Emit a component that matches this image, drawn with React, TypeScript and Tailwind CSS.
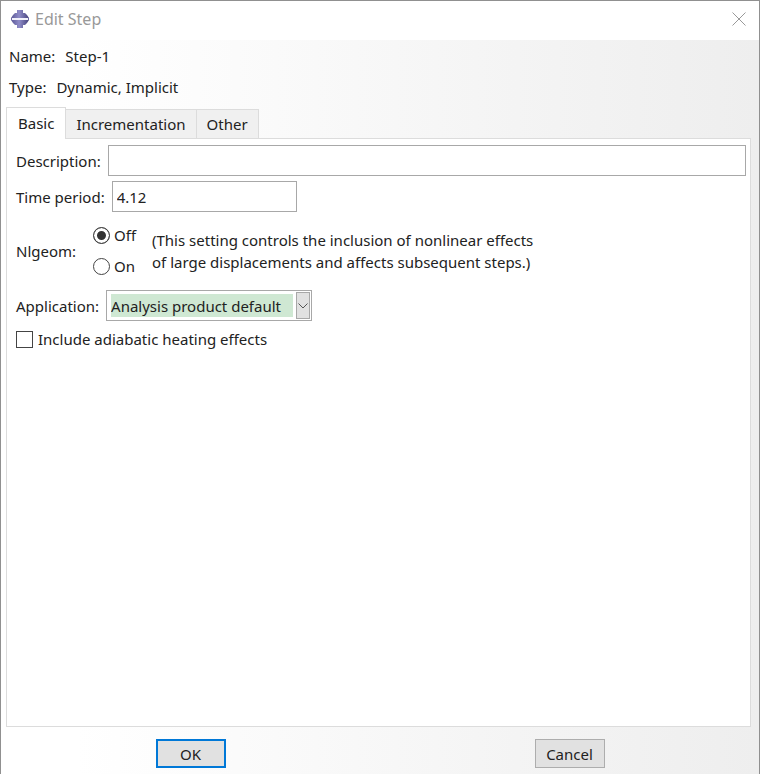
import { useState } from 'react';

const tabs = ['Basic', 'Incrementation', 'Other'];

const radioClass =
  'size-[17px] appearance-none rounded-full border border-[#444444] bg-white checked:bg-[#333333] checked:shadow-[inset_0_0_0_3px_#ffffff]';

function AppIcon() {
  return (
    <svg width="18" height="18" viewBox="0 0 18 18" aria-hidden="true">
      <defs>
        <linearGradient id="steel" x1="0" x2="1" y1="0" y2="0">
          <stop offset="0" stopColor="#5a5796" />
          <stop offset="0.45" stopColor="#8f8cc8" />
          <stop offset="1" stopColor="#45427c" />
        </linearGradient>
      </defs>
      <path d="M6 0h6v3h2l2 2 2 3H0l2-3 2-2h2z" fill="url(#steel)" />
      <path d="M0 10h18l-2 3-2 2h-2v3H6v-3H4l-2-2z" fill="url(#steel)" />
      <path d="M1 8h16v2H1z" fill="#f1f1fb" />
      <path d="M0 8h1v2H0zM17 8h1v2h-1z" fill="#6b68a4" />
    </svg>
  );
}

function TitleBar() {
  return (
    <header className="flex h-[39px] items-center justify-between bg-white pr-3 pb-1 pl-2.5">
      <div className="flex items-center gap-1.5">
        <AppIcon />
        <h1 className="text-base leading-6 text-[#999999]">Edit Step</h1>
      </div>
      <button type="button" aria-label="Close">
        <svg width="16" height="16" viewBox="0 0 16 16" fill="none" stroke="#999999">
          <path d="M1.5 1.5l13 13M14.5 1.5l-13 13" />
        </svg>
      </button>
    </header>
  );
}

function BasicPanel() {
  const [nlgeom, setNlgeom] = useState('off');

  return (
    <div className="flex flex-col items-start px-1 pt-1.5 pl-[9px]">
      <div className="flex w-full items-center gap-[7px]">
        <label htmlFor="description">Description:</label>
        <input
          id="description"
          type="text"
          className="h-[31px] min-w-0 flex-1 border border-[#a8a8a8] bg-white px-1"
        />
      </div>

      <div className="mt-[5px] flex items-center gap-[7px]">
        <label htmlFor="period">Time period:</label>
        <input
          id="period"
          type="text"
          defaultValue="4.12"
          className="h-[31px] w-[185px] border border-[#a8a8a8] bg-white px-1"
        />
      </div>

      <div role="radiogroup" aria-labelledby="nlgeom-label" className="mt-[11px] flex items-center">
        <span id="nlgeom-label" className="w-[77px]">
          Nlgeom:
        </span>
        <div className="flex w-[59px] flex-col gap-[7px]">
          <label className="flex items-center gap-1">
            <input
              type="radio"
              name="nlgeom"
              className={radioClass}
              checked={nlgeom === 'off'}
              onChange={() => setNlgeom('off')}
            />
            Off
          </label>
          <label className="flex items-center gap-1">
            <input
              type="radio"
              name="nlgeom"
              className={radioClass}
              checked={nlgeom === 'on'}
              onChange={() => setNlgeom('on')}
            />
            On
          </label>
        </div>
        <p className="leading-[22px]">
          (This setting controls the inclusion of nonlinear effects
          <br />
          of large displacements and affects subsequent steps.)
        </p>
      </div>

      <div className="mt-3 flex items-center gap-[7px]">
        <label htmlFor="application">Application:</label>
        <div className="relative">
          {/* Only the content box is tinted, the padding stays white */}
          <select
            id="application"
            className="h-[31px] w-[206px] appearance-none border border-[#a8a8a8] bg-[#cfe8d3] bg-clip-content py-[3px] pr-[18px] pl-1"
          >
            <option>Analysis product default</option>
          </select>
          <span className="pointer-events-none absolute top-[2px] right-[2px] flex h-[27px] w-[14px] items-center justify-center border border-[#a8a8a8] bg-[#e1e1e1]">
            <svg width="10" height="6" viewBox="0 0 10 6" fill="none" stroke="#555555">
              <path d="M0.5 0.5L5 5l4.5-4.5" />
            </svg>
          </span>
        </div>
      </div>

      <label className="mt-1.5 flex items-center gap-[5px]">
        <input
          type="checkbox"
          className="size-[17px] appearance-none border border-[#444444] bg-white checked:bg-[#333333]"
        />
        Include adiabatic heating effects
      </label>
    </div>
  );
}

export default function App() {
  const [active, setActive] = useState('Basic');

  return (
    <div className="flex min-h-screen flex-col border-t border-r border-l border-[#909090] bg-linear-to-r from-white from-10% to-[#eeeeee] font-['Noto_Sans',sans-serif] text-[15px] leading-6 text-[#222222]">
      <TitleBar />

      <dl className="px-2 pt-1">
        <div className="flex gap-2.5">
          <dt>Name:</dt>
          <dd>Step-1</dd>
        </div>
        <div className="mt-[7px] flex gap-2.5">
          <dt>Type:</dt>
          <dd>Dynamic, Implicit</dd>
        </div>
      </dl>

      <main className="mt-2 mr-2 ml-[5px] flex flex-1 flex-col">
        <div role="tablist" className="flex items-end">
          {tabs.map((tab) => (
            <button
              key={tab}
              type="button"
              role="tab"
              aria-selected={active === tab}
              onClick={() => setActive(tab)}
              className={
                active === tab
                  ? 'relative z-10 -mb-px h-8 border border-b-0 border-[#dcdcdc] bg-white px-[11px] pb-0.5'
                  : 'h-[29px] border-t border-r border-[#dcdcdc] bg-[#f0f0f0] px-2.5'
              }
            >
              {tab}
            </button>
          ))}
        </div>
        <div role="tabpanel" className="flex-1 border border-[#dcdcdc] bg-white">
          {active === 'Basic' && <BasicPanel />}
        </div>
      </main>

      <footer className="grid grid-cols-2 justify-items-center pt-3 pb-1.5">
        <button type="button" className="h-[29px] w-[70px] border-2 border-[#0078d7] bg-[#e1e1e1]">
          OK
        </button>
        <button type="button" className="h-[29px] w-[70px] border border-[#adadad] bg-[#e1e1e1]">
          Cancel
        </button>
      </footer>
    </div>
  );
}
